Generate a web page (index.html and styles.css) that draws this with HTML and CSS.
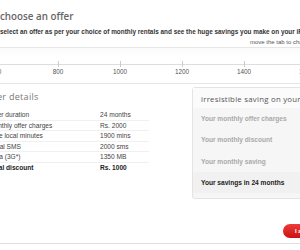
FILE: index.html
```html
<!DOCTYPE html>
<html lang="en">
<head>
  <meta charset="UTF-8">
  <title>Choose an offer</title>
  <link rel="stylesheet" href="styles.css">
</head>
<body>
  <div class="page">
    <!-- Intro -->
    <div class="intro">
      <h1>choose an offer</h1>
      <p class="lead">select an offer as per your choice of monthly rentals and see the huge savings you make on your iPhone 4</p>
      <p class="hint">move the tab to change the monthly rental</p>
    </div>

    <!-- Rental slider -->
    <div class="slider">
      <div class="track">
        <div class="tick"><i></i><span>600</span></div>
        <div class="tick"><i></i><span>800</span></div>
        <div class="tick"><i></i><span>1000</span></div>
        <div class="tick"><i></i><span>1200</span></div>
        <div class="tick"><i></i><span>1400</span></div>
        <div class="tick"><i></i><span>1600</span></div>
      </div>
    </div>

    <!-- Offer -->
    <div class="offer">
      <div class="details">
        <h2>Offer details</h2>
        <table>
          <tr><td>Offer duration</td><td>24 months</td></tr>
          <tr><td>Monthly offer charges</td><td>Rs. 2000</td></tr>
          <tr><td>Free local minutes</td><td>1900 mins</td></tr>
          <tr><td>Local SMS</td><td>2000 sms</td></tr>
          <tr><td>Data (3G*)</td><td>1350 MB</td></tr>
          <tr class="total"><td>Total discount</td><td>Rs. 1000</td></tr>
        </table>
      </div>
      <div class="saving">
        <h3>irresistible saving on your iPhone 4</h3>
        <ul>
          <li>Your monthly offer charges</li>
          <li>Your monthly discount</li>
          <li>Your monthly saving</li>
          <li class="total">Your savings in 24 months</li>
        </ul>
      </div>
    </div>

    <div class="actions">
      <button>I agree</button>
    </div>
  </div>
</body>
</html>
```

FILE: styles.css
```css
body {
  margin: 0;
  padding: 0;
  background-color: #fff;
  overflow: hidden;
  font-family: "Liberation Sans", Arial, sans-serif;
}
.page {
  margin-left: -16px;
  width: 520px;
}
.intro {
  padding: 10px 0 1px 16px;
  border-bottom: 1px solid #e6e6e6;
}
.intro h1 {
  margin: 0;
  font-family: "Open Sans", sans-serif;
  font-weight: 600;
  font-size: 9.8px;
  line-height: 14px;
  color: #666;
}
.lead {
  margin: 4px 0 0;
  font-size: 6.4px;
  line-height: 8px;
  font-weight: bold;
  color: #333;
  white-space: nowrap;
}
.hint {
  margin: 2px 0 0 250px;
  font-size: 6px;
  line-height: 8px;
  color: #555;
  white-space: nowrap;
}
.slider {
  height: 19px;
  padding-top: 16px;
  border-bottom: 1px solid #e6e6e6;
  background: linear-gradient(#fafafa, #fff 10px);
}
.track {
  display: flex;
  margin-left: -19px;
  border-top: 1px solid #ddd;
}
.tick {
  width: 62px;
  flex: none;
  text-align: center;
}
.tick i {
  display: block;
  width: 1px;
  height: 6px;
  margin: -4px auto 0;
  background-color: #ccc;
}
.tick span {
  display: block;
  font-size: 6.4px;
  line-height: 8px;
  margin-top: 1px;
  color: #555;
}
.offer {
  display: flex;
  align-items: flex-start;
  height: 118px;
}
.details {
  width: 165px;
  margin-right: 43px;
}
.details h2 {
  margin: 6px 0 0 -1px;
  font-family: "Open Sans", sans-serif;
  font-weight: normal;
  font-size: 9px;
  line-height: 14px;
  letter-spacing: 0.3px;
  color: #777;
}
.details table {
  width: 100%;
  margin-top: 6px;
  border-collapse: collapse;
}
.details td {
  padding: 0;
  font-size: 6.6px;
  line-height: 9.6px;
  color: #444;
  border-bottom: 1px solid #f0f0f0;
}
.details td:first-child {
  width: 111px;
  padding-left: 5px;
}
.details .total td {
  font-weight: bold;
  color: #222;
  border-bottom: none;
}
.saving {
  width: 200px;
  margin-top: 3px;
  background-color: #f6f6f6;
  border: 1px solid #e4e4e4;
  border-radius: 3px 0 0 3px;
  padding-bottom: 5px;
}
.saving h3 {
  margin: 0;
  padding: 4px 8px 2px;
  font-family: "Open Sans", sans-serif;
  font-weight: normal;
  font-size: 7.8px;
  line-height: 14px;
  letter-spacing: 0.25px;
  color: #555;
  background-color: #fbfbfb;
  white-space: nowrap;
}
.saving ul {
  list-style-type: none;
  margin: 0;
  padding: 0;
}
.saving li {
  padding: 0 8px;
  font-size: 6.6px;
  line-height: 21.3px;
  font-weight: bold;
  color: #aaa;
}
.saving li.total {
  color: #222;
  background-color: #f1f1f1;
}
.actions {
  padding: 22px 0 5px 299px;
  border-bottom: 1px solid #e0e0e0;
}
.actions button {
  display: block;
  height: 14px;
  padding: 0 12px;
  margin: 0;
  border: none;
  border-radius: 7px;
  background: linear-gradient(#ee3b3b, #cc1111);
  color: white;
  font-family: "Liberation Sans", Arial, sans-serif;
  font-weight: bold;
  font-size: 6px;
  cursor: pointer;
}
```
